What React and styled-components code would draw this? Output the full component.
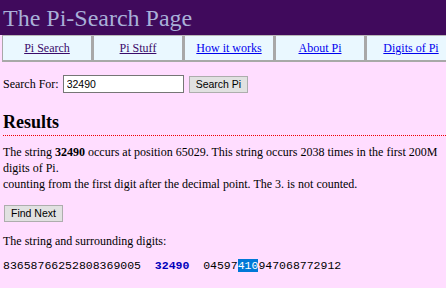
import React from "react";
import styled, { createGlobalStyle } from "styled-components";

const GlobalStyle = createGlobalStyle`
  html, body {
    margin: 0;
    padding: 0;
    background: #ffddff;
    overflow: hidden;
  }
  body {
    font-family: "Liberation Serif", "Times New Roman", serif;
    font-size: 12px;
    color: #000;
  }
`;

const Page = styled.div`
  width: 446px;
  height: 288px;
  overflow: hidden;
`;

const Header = styled.div`
  background: #400a5c;
  height: 35px;
  padding: 0 3px;
  display: flex;
  align-items: center;
`;

const Title = styled.h1`
  margin: 0;
  font-weight: normal;
  font-size: 24px;
  color: #a9b0d8;
  line-height: 1;
`;

const Nav = styled.div`
  display: flex;
  gap: 3px;
  margin-left: 2px;
  background: #a8a8a8;
  border-left: 1px solid #a8a8a8;
  border-top: 1px solid #b8b8b8;
  border-bottom: 2px solid #a8a8a8;
  width: 500px;
`;

const NavCell = styled.div`
  flex: 0 0 88px;
  height: 24px;
  background: #eaf8ff;
  display: flex;
  align-items: center;
  justify-content: center;
`;

const NavLink = styled.a`
  color: ${p => (p.visited ? "#3a0a6a" : "#0000ee")};
  text-decoration: underline;
  white-space: nowrap;
`;

const Content = styled.div`
  padding: 0 3px;
`;

const SearchRow = styled.form`
  display: flex;
  align-items: center;
  margin-top: 13px;
`;

const Label = styled.span`
  margin-right: 4px;
`;

const TextInput = styled.input`
  box-sizing: border-box;
  width: 121px;
  height: 18px;
  border: 1px solid #767676;
  background: #fff;
  padding: 0 3px;
  font-family: "Liberation Sans", Arial, sans-serif;
  font-size: 10.5px;
  outline: none;
`;

const Button = styled.button`
  box-sizing: border-box;
  height: 17px;
  padding: 0 6px;
  margin-left: ${p => p.gap || 0}px;
  background: #e1e1e1;
  border: 1px solid #adadad;
  border-radius: 0;
  font-family: "Liberation Sans", Arial, sans-serif;
  font-size: 10.5px;
  color: #000;
  line-height: 15px;
`;

const Heading = styled.h2`
  margin: 19px -3px 0 0;
  font-size: 18px;
  font-weight: bold;
  line-height: 20px;
  padding-bottom: 4px;
  background-image: linear-gradient(to right, #ee0000 50%, transparent 50%);
  background-size: 2px 1px;
  background-repeat: repeat-x;
  background-position: left bottom;
`;

const Para = styled.p`
  margin: ${p => p.top || 0}px 0 0;
  line-height: 16px;
`;

const Digits = styled.div`
  margin-top: 10px;
  font-family: "Liberation Mono", "Courier New", monospace;
  font-size: 11.5px;
  white-space: pre;
`;

const Match = styled.b`
  color: #0000bb;
`;

const Hit = styled.span`
  background: #0078d7;
  color: #fff;
`;

const links = [
  { label: "Pi Search", visited: true },
  { label: "Pi Stuff", visited: true },
  { label: "How it works" },
  { label: "About Pi" },
  { label: "Digits of Pi" },
];

export default function App() {
  return (
    <Page>
      <GlobalStyle />
      <Header>
        <Title>The Pi-Search Page</Title>
      </Header>
      <Nav>
        {links.map(l => (
          <NavCell key={l.label}>
            <NavLink href="#" visited={l.visited ? 1 : 0}>
              {l.label}
            </NavLink>
          </NavCell>
        ))}
      </Nav>
      <Content>
        <SearchRow onSubmit={e => e.preventDefault()}>
          <Label>Search For:</Label>
          <TextInput defaultValue="32490" />
          <Button gap={5}>Search Pi</Button>
        </SearchRow>
        <Heading>Results</Heading>
        <Para top={8}>
          The string <b>32490</b> occurs at position 65029. This string occurs
          2038 times in the first 200M digits of Pi.
          <br />
          counting from the first digit after the decimal point. The 3. is not
          counted.
        </Para>
        <Para top={13}>
          <Button gap={1}>Find Next</Button>
        </Para>
        <Para top={11}>The string and surrounding digits:</Para>
        <Digits>
          {"83658766252808369005  "}
          <Match>32490</Match>
          {"  04597"}
          <Hit>410</Hit>
          {"947068772912"}
        </Digits>
      </Content>
    </Page>
  );
}
